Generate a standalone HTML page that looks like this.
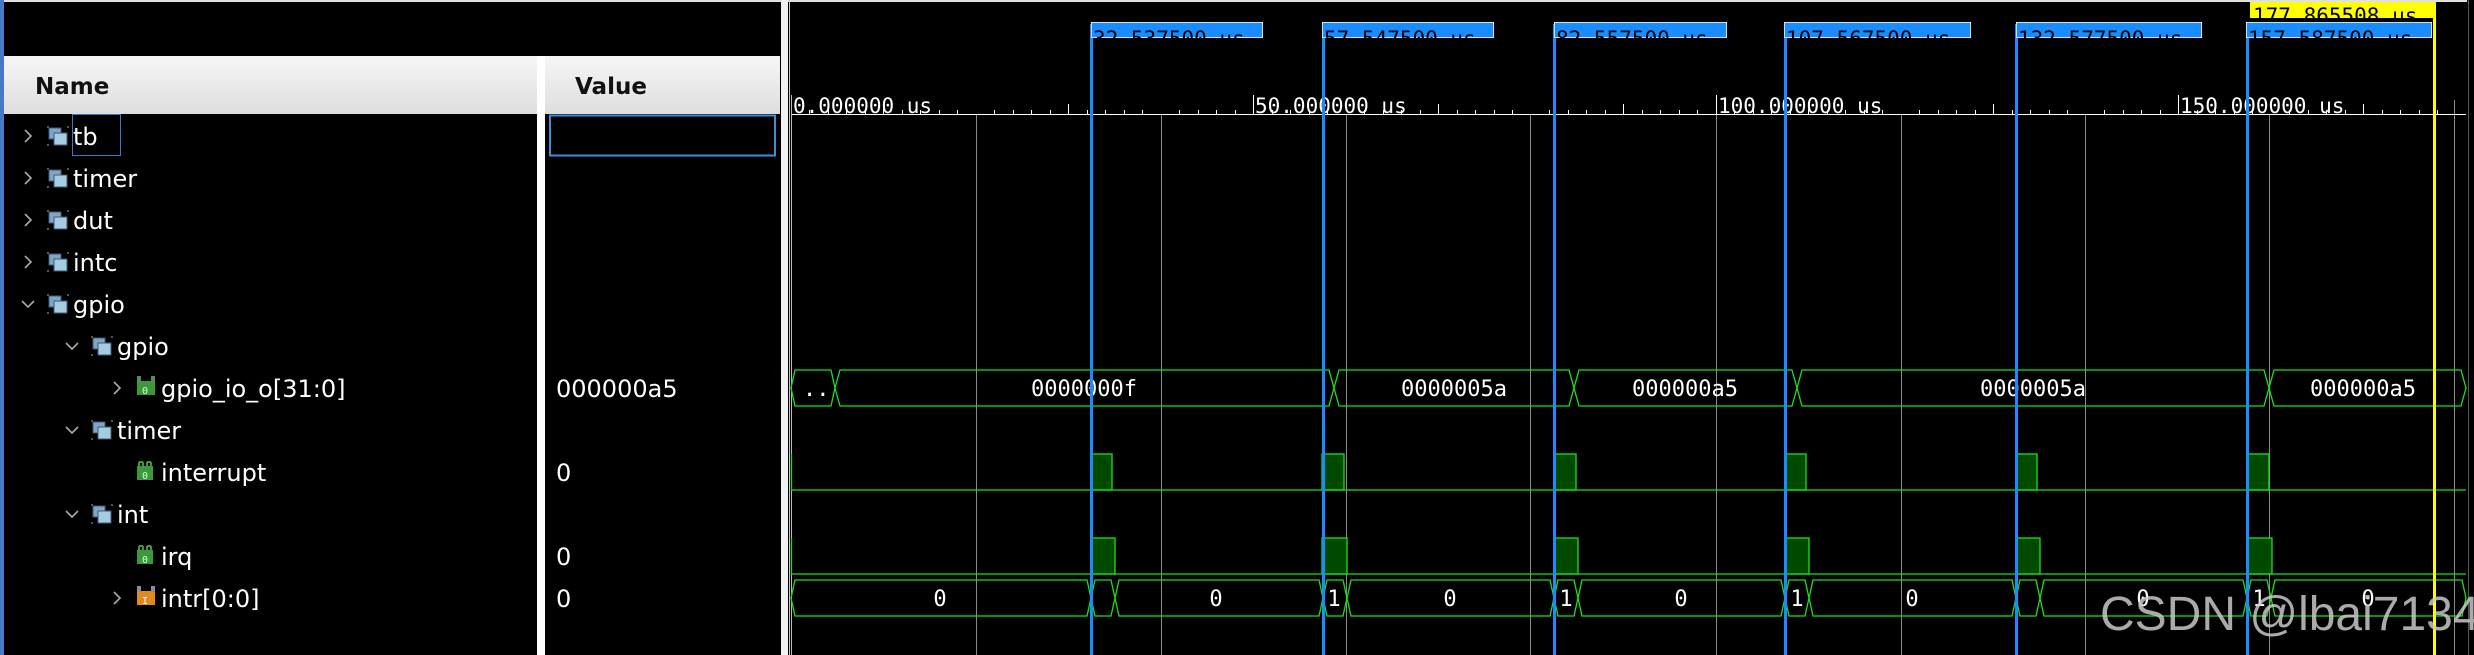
<!DOCTYPE html>
<html><head><meta charset="utf-8"><style>
html,body{margin:0;padding:0;background:#000;width:2474px;height:655px;overflow:hidden}
svg{display:block}
.n{font-family:"DejaVu Sans","Liberation Sans",sans-serif;font-size:24px;fill:#fff}
.m{font-family:"DejaVu Sans Mono","Liberation Mono",monospace;font-size:21px;fill:#fff}
.b{font-family:"DejaVu Sans Mono","Liberation Mono",monospace;font-size:22px;fill:#fff}
.c{font-family:"DejaVu Sans Mono","Liberation Mono",monospace;font-size:21px;fill:#000}
</style></head><body>
<svg width="2474" height="655" viewBox="0 0 2474 655" xmlns="http://www.w3.org/2000/svg">
<defs>
<linearGradient id="hg" x1="0" y1="0" x2="0" y2="1"><stop offset="0" stop-color="#f6f6f6"/><stop offset="1" stop-color="#dedede"/></linearGradient>
<g id="scope"><rect x="0" y="0" width="12" height="11" fill="#7fa6c6" stroke="#3d5a78" stroke-width="1"/><rect x="5" y="5" width="13" height="12" fill="#a6cce2" stroke="#3d5a78" stroke-width="1"/><rect x="-2" y="-2" width="2" height="2" fill="#555"/><rect x="-2" y="16" width="2" height="2" fill="#555"/><rect x="18" y="-2" width="2" height="2" fill="#555"/></g>
<g id="sig"><rect x="0" y="4" width="16" height="14" fill="#3a9a3a"/><path d="M2 0v10M6 0v10M2 0h4M10 0v10M14 0v10M10 0h4" stroke="#3a9a3a" stroke-width="2" fill="none"/><text x="5" y="17" font-family="DejaVu Sans Mono,monospace" font-size="10" fill="#cfc">0</text></g>
<g id="bus"><rect x="0" y="5" width="18" height="14" fill="#3a9a3a"/><path d="M0 0h4v6h-4zM14 0h4v6h-4z" fill="#5a8a5a"/><text x="5" y="18" font-family="DejaVu Sans Mono,monospace" font-size="10" fill="#cfc">0</text></g>
<g id="busI"><rect x="0" y="5" width="18" height="14" fill="#e08a20"/><path d="M0 0h4v6h-4zM14 0h4v6h-4z" fill="#8a8aa0"/><text x="5" y="18" font-family="DejaVu Sans Mono,monospace" font-size="10" fill="#fff">I</text></g>
<g id="chR"><path d="M0 0l6 6l-6 6" stroke="#aaa" stroke-width="1.6" fill="none"/></g>
<g id="chD"><path d="M0 0l6 6l6 -6" stroke="#aaa" stroke-width="1.6" fill="none"/></g>
</defs>
<rect width="2474" height="655" fill="#000"/>
<rect x="0" y="0" width="2474" height="2" fill="#e0e0e0"/>
<rect x="0" y="0" width="4" height="655" fill="#4a78c8"/>
<rect x="4" y="56" width="533" height="58" fill="url(#hg)"/>
<rect x="545" y="56" width="235" height="58" fill="url(#hg)"/>
<rect x="537" y="56" width="8" height="599" fill="#fff"/>
<rect x="781" y="0" width="7" height="655" fill="#f2f2f2"/>
<text x="35" y="94" class="n" style="font-weight:bold;fill:#111;font-size:23px">Name</text>
<text x="575" y="94" class="n" style="font-weight:bold;fill:#111;font-size:23px">Value</text>
<rect x="72.5" y="114.5" width="48" height="41" fill="none" stroke="#3a7ac8" stroke-width="1"/>
<rect x="550" y="115.5" width="225" height="40" fill="none" stroke="#3a8ee0" stroke-width="2"/>
<use href="#chR" x="25" y="130"/><use href="#scope" x="49" y="128"/><text x="73" y="145" class="n">tb</text>
<use href="#chR" x="25" y="172"/><use href="#scope" x="49" y="170"/><text x="73" y="187" class="n">timer</text>
<use href="#chR" x="25" y="214"/><use href="#scope" x="49" y="212"/><text x="73" y="229" class="n">dut</text>
<use href="#chR" x="25" y="256"/><use href="#scope" x="49" y="254"/><text x="73" y="271" class="n">intc</text>
<use href="#chD" x="22" y="301"/><use href="#scope" x="49" y="296"/><text x="73" y="313" class="n">gpio</text>
<use href="#chD" x="66" y="343"/><use href="#scope" x="93" y="338"/><text x="117" y="355" class="n">gpio</text>
<use href="#chR" x="114" y="382"/><use href="#bus" x="137" y="376"/><text x="161" y="397" class="n">gpio_io_o[31:0]</text>
<text x="556" y="397" class="n">000000a5</text>
<use href="#chD" x="66" y="427"/><use href="#scope" x="93" y="422"/><text x="117" y="439" class="n">timer</text>
<use href="#sig" x="137" y="462"/><text x="161" y="481" class="n">interrupt</text><text x="556" y="481" class="n">0</text>
<use href="#chD" x="66" y="511"/><use href="#scope" x="93" y="506"/><text x="117" y="523" class="n">int</text>
<use href="#sig" x="137" y="546"/><text x="161" y="565" class="n">irq</text><text x="556" y="565" class="n">0</text>
<use href="#chR" x="114" y="592"/><use href="#busI" x="137" y="586"/><text x="161" y="607" class="n">intr[0:0]</text><text x="556" y="607" class="n">0</text>

<rect x="789" y="0" width="1" height="655" fill="#ccc"/>
<g stroke="#8a8a8a" stroke-width="1">
<line x1="976.5" y1="114" x2="976.5" y2="655"/><line x1="1161.5" y1="114" x2="1161.5" y2="655"/><line x1="1346.5" y1="114" x2="1346.5" y2="655"/><line x1="1530.5" y1="114" x2="1530.5" y2="655"/><line x1="1716.5" y1="114" x2="1716.5" y2="655"/><line x1="1901.5" y1="114" x2="1901.5" y2="655"/><line x1="2085.5" y1="114" x2="2085.5" y2="655"/><line x1="2269.5" y1="114" x2="2269.5" y2="655"/><line x1="2454.5" y1="100" x2="2454.5" y2="655"/>
</g>
<line x1="791" y1="114.5" x2="2466" y2="114.5" stroke="#fff" stroke-width="1"/>
<line x1="791.5" y1="95" x2="791.5" y2="655" stroke="#bbb"/>
<g stroke="#fff" stroke-width="1">
<path d="M809.5 110v4M828.5 110v4M846.5 110v4M865.5 110v4M883.5 104v10M902.5 110v4M920.5 110v4M939.5 110v4M957.5 110v4M994.5 110v4M1013.5 110v4M1031.5 110v4M1050.5 110v4M1068.5 104v10M1087.5 110v4M1105.5 110v4M1124.5 110v4M1142.5 110v4M1179.5 110v4M1198.5 110v4M1216.5 110v4M1235.5 110v4M1253.5 95v19M1272.5 110v4M1290.5 110v4M1309.5 110v4M1327.5 110v4M1364.5 110v4M1383.5 110v4M1401.5 110v4M1420.5 110v4M1438.5 104v10M1457.5 110v4M1475.5 110v4M1494.5 110v4M1512.5 110v4M1549.5 110v4M1568.5 110v4M1586.5 110v4M1605.5 110v4M1623.5 104v10M1642.5 110v4M1660.5 110v4M1679.5 110v4M1697.5 110v4M1716.5 95v19M1734.5 110v4M1753.5 110v4M1771.5 110v4M1790.5 110v4M1808.5 104v10M1827.5 110v4M1845.5 110v4M1864.5 110v4M1882.5 110v4M1919.5 110v4M1938.5 110v4M1956.5 110v4M1975.5 110v4M1993.5 104v10M2012.5 110v4M2030.5 110v4M2049.5 110v4M2067.5 110v4M2104.5 110v4M2123.5 110v4M2141.5 110v4M2160.5 110v4M2178.5 95v19M2197.5 110v4M2215.5 110v4M2234.5 110v4M2252.5 110v4M2289.5 110v4M2308.5 110v4M2326.5 110v4M2345.5 110v4M2363.5 104v10M2382.5 110v4M2400.5 110v4M2419.5 110v4M2437.5 110v4"/>
</g>
<text x="793" y="113" class="m">0.000000 us</text>
<text x="1255" y="113" class="m">50.000000 us</text>
<text x="1718" y="113" class="m">100.000000 us</text>
<text x="2180" y="113" class="m">150.000000 us</text>

<g stroke="#1be01b" stroke-width="1.3" fill="none">
<path d="M791 388L795 370H831L835 388L831 406H795Z"/>
<path d="M835 388L840 370H1329L1334 388L1329 406H840Z"/>
<path d="M1334 388L1339 370H1569L1574 388L1569 406H1339Z"/>
<path d="M1574 388L1579 370H1792L1797 388L1792 406H1579Z"/>
<path d="M1797 388L1802 370H2264L2269 388L2264 406H1802Z"/>
<path d="M2269 388L2274 370H2461L2466 388L2461 406H2274Z"/>
</g>
<text x="803" y="396" class="b">..</text>
<text x="1084" y="396" class="b" text-anchor="middle">0000000f</text>
<text x="1454" y="396" class="b" text-anchor="middle">0000005a</text>
<text x="1685" y="396" class="b" text-anchor="middle">000000a5</text>
<text x="2033" y="396" class="b" text-anchor="middle">0000005a</text>
<text x="2363" y="396" class="b" text-anchor="middle">000000a5</text>

<g fill="#004a00" stroke="#1be01b" stroke-width="1.3">
<rect x="1091" y="454" width="21" height="36"/><rect x="1322" y="454" width="22" height="36"/><rect x="1554" y="454" width="22" height="36"/><rect x="1785" y="454" width="21" height="36"/><rect x="2016" y="454" width="21" height="36"/><rect x="2248" y="454" width="21" height="36"/>
<rect x="1091" y="538" width="24" height="36"/><rect x="1322" y="538" width="25" height="36"/><rect x="1554" y="538" width="24" height="36"/><rect x="1785" y="538" width="24" height="36"/><rect x="2016" y="538" width="24" height="36"/><rect x="2248" y="538" width="24" height="36"/>
</g>
<g stroke="#1be01b" stroke-width="1.3" fill="none">
<path d="M791.5 454V490H2466"/>
<path d="M791.5 538V574H2466"/>
<path d="M791 598L795 580H1087L1091 598L1087 616H795Z"/>
<path d="M1091 598L1095 580H1111L1115 598L1111 616H1095Z"/>
<path d="M1115 598L1119 580H1319L1323 598L1319 616H1119Z"/>
<path d="M1323 598L1327 580H1343L1347 598L1343 616H1327Z"/>
<path d="M1347 598L1351 580H1550L1554 598L1550 616H1351Z"/>
<path d="M1554 598L1558 580H1574L1578 598L1574 616H1558Z"/>
<path d="M1578 598L1582 580H1781L1785 598L1781 616H1582Z"/>
<path d="M1785 598L1789 580H1805L1809 598L1805 616H1789Z"/>
<path d="M1809 598L1813 580H2012L2016 598L2012 616H1813Z"/>
<path d="M2016 598L2020 580H2036L2040 598L2036 616H2020Z"/>
<path d="M2040 598L2044 580H2243L2247 598L2243 616H2044Z"/>
<path d="M2247 598L2251 580H2267L2271 598L2267 616H2251Z"/>
<path d="M2271 598L2275 580H2462L2466 598L2462 616H2275Z"/>
</g>
<g class="b" text-anchor="middle">
<text x="940" y="606">0</text><text x="1216" y="606">0</text><text x="1450" y="606">0</text><text x="1681" y="606">0</text><text x="1912" y="606">0</text><text x="2143" y="606">0</text><text x="2368" y="606">0</text>
<text x="1334" y="606">1</text><text x="1566" y="606">1</text><text x="1797" y="606">1</text><text x="2259" y="606">1</text>
</g>

<g fill="#1a8cff">
<rect x="1090" y="24" width="3" height="631"/><rect x="1322" y="24" width="3" height="631"/><rect x="1553" y="24" width="3" height="631"/><rect x="1784" y="24" width="3" height="631"/><rect x="2015" y="24" width="3" height="631"/><rect x="2246" y="24" width="3" height="631"/>
</g>
<rect x="2433" y="8" width="3" height="647" fill="#ffff00"/>
<svg x="1091" y="22" width="172" height="16" overflow="hidden"><rect width="172" height="16" fill="#1a8cff" stroke="#fff" stroke-width="1.5"/><text x="2" y="24" class="c">32.537500 us</text></svg>
<svg x="1322" y="22" width="172" height="16" overflow="hidden"><rect width="172" height="16" fill="#1a8cff" stroke="#fff" stroke-width="1.5"/><text x="2" y="24" class="c">57.547500 us</text></svg>
<svg x="1554" y="22" width="173" height="16" overflow="hidden"><rect width="173" height="16" fill="#1a8cff" stroke="#fff" stroke-width="1.5"/><text x="2" y="24" class="c">82.557500 us</text></svg>
<svg x="1784" y="22" width="187" height="16" overflow="hidden"><rect width="187" height="16" fill="#1a8cff" stroke="#fff" stroke-width="1.5"/><text x="2" y="24" class="c">107.567500 us</text></svg>
<svg x="2016" y="22" width="186" height="16" overflow="hidden"><rect width="186" height="16" fill="#1a8cff" stroke="#fff" stroke-width="1.5"/><text x="2" y="24" class="c">132.577500 us</text></svg>
<svg x="2250" y="2" width="186" height="16" overflow="hidden"><rect width="186" height="16" fill="#ffff00"/><text x="3" y="21" class="c">177.865508 us</text></svg>
<svg x="2246" y="22" width="186" height="16" overflow="hidden"><rect width="186" height="16" fill="#1a8cff" stroke="#fff" stroke-width="1.5"/><text x="2" y="24" class="c">157.587500 us</text></svg>
<rect x="2467" y="0" width="7" height="655" fill="#000"/>
<line x1="2468.5" y1="0" x2="2468.5" y2="655" stroke="#555"/>
<text x="2100" y="630" font-family="Liberation Sans,sans-serif" font-size="48" fill="#c8c8c8" fill-opacity="0.85">CSDN @lbai7134</text>
</svg>
</body></html>
